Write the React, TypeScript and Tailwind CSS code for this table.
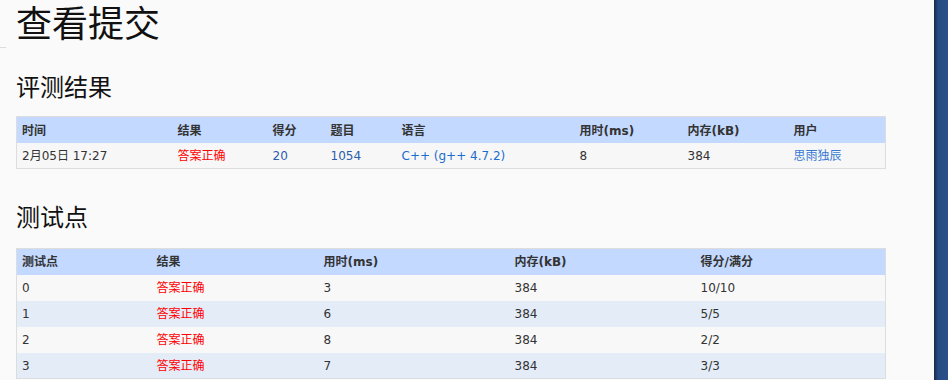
import React from "react";

const font = { fontFamily: '"DejaVu Sans", "Noto Sans CJK SC", sans-serif' };
const cjk = { fontFamily: '"Noto Sans CJK SC", sans-serif' };

interface Case {
  id: number;
  time: number;
  mem: number;
  score: string;
}

const cases: Case[] = [
  { id: 0, time: 3, mem: 384, score: "10/10" },
  { id: 1, time: 6, mem: 384, score: "5/5" },
  { id: 2, time: 8, mem: 384, score: "2/2" },
  { id: 3, time: 7, mem: 384, score: "3/3" },
];

export default function App() {
  return (
    <div className="relative flex h-[380px] w-[948px] overflow-hidden bg-[#fafafa] text-[#333]" style={font}>
      {/* left rule from sidebar */}
      <div className="absolute left-0 top-[47px] h-px w-[6px] bg-[#dcdcdc]" />

      <main className="flex-1 pl-4">
        <h1 className="pt-[1px] text-[36px] leading-[40px] text-[#111] font-normal" style={cjk}>
          查看提交
        </h1>

        <h2 className="mt-[29px] text-[24px] leading-[32px] text-[#111] font-normal" style={cjk}>
          评测结果
        </h2>

        {/* judge result */}
        <table className="mt-[14px] w-[870px] table-fixed border-collapse border border-[#dddddd] text-[12px]">
          <colgroup>
            <col className="w-[156px]" />
            <col className="w-[95px]" />
            <col className="w-[58px]" />
            <col className="w-[71px]" />
            <col className="w-[178px]" />
            <col className="w-[108px]" />
            <col className="w-[106px]" />
            <col />
          </colgroup>
          <thead>
            <tr className="h-[26px] bg-[#c3d9ff] text-left text-[#333]">
              <th className="pl-[5px] pt-[2px] font-bold">时间</th>
              <th className="pl-[5px] pt-[2px] font-bold">结果</th>
              <th className="pl-[5px] pt-[2px] font-bold">得分</th>
              <th className="pl-[5px] pt-[2px] font-bold">题目</th>
              <th className="pl-[5px] pt-[2px] font-bold">语言</th>
              <th className="pl-[5px] pt-[2px] font-bold">用时(ms)</th>
              <th className="pl-[5px] pt-[2px] font-bold">内存(kB)</th>
              <th className="pl-[5px] pt-[2px] font-bold">用户</th>
            </tr>
          </thead>
          <tbody>
            <tr className="h-[26px] bg-[#f7f7f7]">
              <td className="pl-[5px] pt-[2px]">2月05日 17:27</td>
              <td className="pl-[5px] pt-[2px] text-[#ff0000]">答案正确</td>
              <td className="pl-[5px] pt-[2px] text-[#2a5caa]">20</td>
              <td className="pl-[5px] pt-[2px] text-[#2a5caa]">1054</td>
              <td className="pl-[5px] pt-[2px] text-[#1a6dcc]">C++ (g++ 4.7.2)</td>
              <td className="pl-[5px] pt-[2px]">8</td>
              <td className="pl-[5px] pt-[2px]">384</td>
              <td className="pl-[5px] pt-[2px] text-[#3579d4]">思雨独辰</td>
            </tr>
          </tbody>
        </table>

        <h2 className="mt-[31px] text-[24px] leading-[32px] text-[#111] font-normal" style={cjk}>
          测试点
        </h2>

        {/* test cases */}
        <table className="mt-[16px] w-[870px] table-fixed border-collapse border border-[#dddddd] text-[12px]">
          <colgroup>
            <col className="w-[135px]" />
            <col className="w-[167px]" />
            <col className="w-[191px]" />
            <col className="w-[186px]" />
            <col />
          </colgroup>
          <thead>
            <tr className="h-[26px] bg-[#c3d9ff] text-left text-[#333]">
              <th className="pl-[5px] pt-[1px] font-bold">测试点</th>
              <th className="pl-[5px] pt-[1px] font-bold">结果</th>
              <th className="pl-[5px] pt-[1px] font-bold">用时(ms)</th>
              <th className="pl-[5px] pt-[1px] font-bold">内存(kB)</th>
              <th className="pl-[5px] pt-[1px] font-bold">得分/满分</th>
            </tr>
          </thead>
          <tbody>
            {cases.map((c, i) => (
              <tr key={c.id} className={i % 2 === 0 ? "h-[26px] bg-[#f8f8f8]" : "h-[26px] bg-[#e4ecf8]"}>
                <td className="pl-[5px] pt-[1px]">{c.id}</td>
                <td className="pl-[5px] pt-[1px] text-[#ff0000]">答案正确</td>
                <td className="pl-[5px] pt-[1px]">{c.time}</td>
                <td className="pl-[5px] pt-[1px]">{c.mem}</td>
                <td className="pl-[5px] pt-[1px]">{c.score}</td>
              </tr>
            ))}
          </tbody>
        </table>
      </main>

      {/* right edge panel */}
      <div className="w-[14px] shrink-0 bg-gradient-to-r from-[#16294a] via-[#274c84] via-30% to-[#2a5089]" />
    </div>
  );
}
